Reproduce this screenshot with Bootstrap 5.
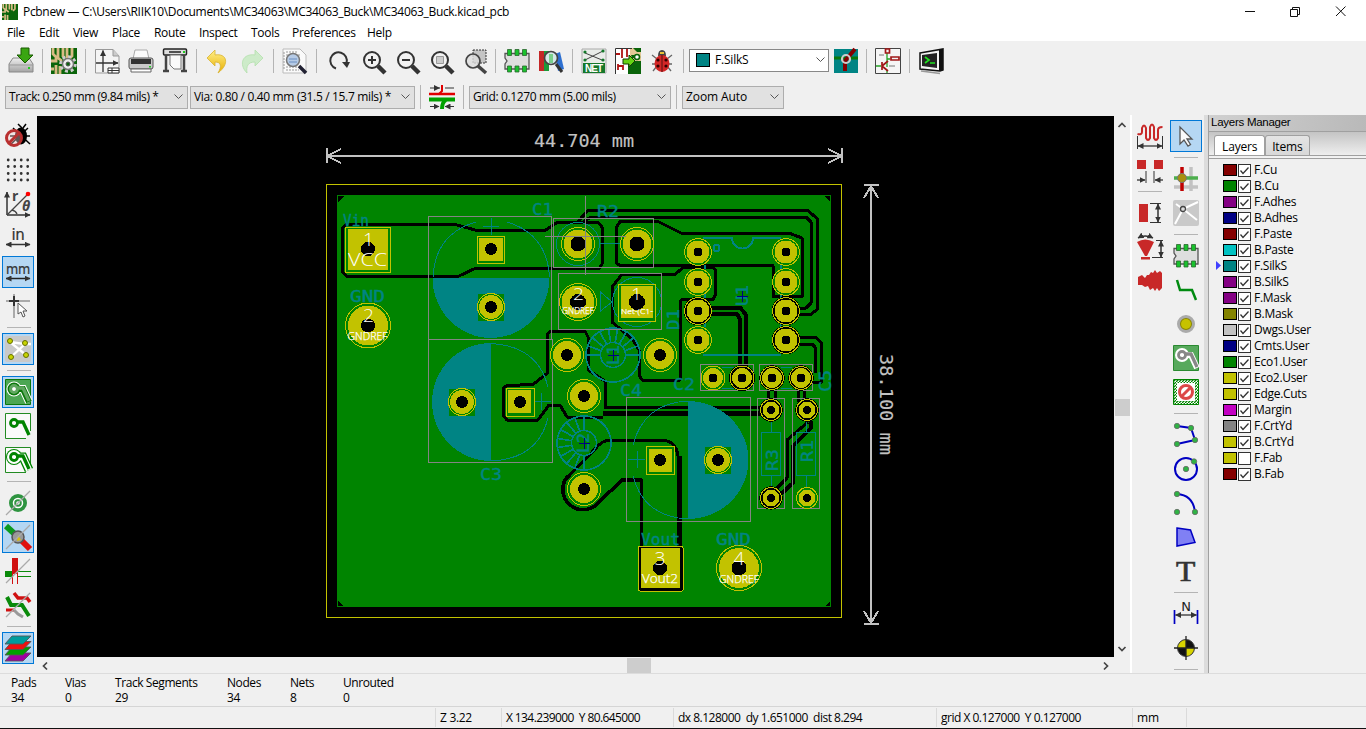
<!DOCTYPE html>
<html lang="en">
<head>
<meta charset="utf-8">
<title>Pcbnew</title>
<link href="https://cdn.jsdelivr.net/npm/bootstrap@5.3.0/dist/css/bootstrap.min.css" rel="stylesheet">
<style>
html,body{height:100%;overflow:hidden}
body{font:12px/16px "Open Sans","Noto Sans",sans-serif;letter-spacing:-.3px;color:#000;background:#f0f0f0;white-space:nowrap}
svg{display:block;flex:none}
.defs{position:absolute;width:0;height:0}
.titlebar{height:23px;background:#fff}
.ttl{margin-left:5px;letter-spacing:-.32px}
.menus{height:18px;background:#fff;padding:2px 0 0 7px}
.bar1{height:40px;padding-left:4px}
.bar2{height:34px;padding:0 0 2px 5px}
.tool{width:34px;height:34px;flex:none;display:flex;align-items:center;justify-content:center}
.tool svg{overflow:visible}
.tool.on{background:linear-gradient(#b5d7f3,#b5d7f3) center/30px 30px no-repeat,linear-gradient(#0078d7,#0078d7) center/32px 32px no-repeat}
.vsep{width:1px;height:24px;margin:0 4px;background:#b4b4b4;flex:none}
.hsep{height:1px;width:24px;margin:4px auto;background:#b4b4b4;flex:none}
.combo{height:23px;border:1px solid #adadad;background:#e1e1e1;padding:0 3px;flex:none;letter-spacing:-.38px}
.combo.pale{background:#fff;border-color:#888;letter-spacing:-.2px}
.workspace{height:558px}
.sidebar{width:37px;padding:4px 0 0 1px}
.toolcol{width:36px;padding-top:4px}
.canvasbox{width:1078px;padding-top:1px}
.hscroll{height:17px;background:#f0f0f0}
.vscroll{width:16px;padding-top:1px}
.thumb{background:#cdcdcd}
.dock{width:158px;border-left:1px solid #a0a0a0;background:#f0f0f0}
.dockhead{height:16px;line-height:15px;background:linear-gradient(100deg,#d0d0d0,#b9b9b9);font-family:"Liberation Sans",sans-serif;font-size:11.5px;letter-spacing:-.27px;padding-left:2px}
.docktabs{height:28px;background:linear-gradient(#c4c4c4,#f4f4f4);border-top:1px solid #a0a0a0;border-bottom:1px solid #a0a0a0;padding:0 0 3px 5px}
.dtab{border:1px solid #a0a0a0;border-bottom:0;border-radius:3px 3px 0 0;background:linear-gradient(#e4e4e4,#d8d8d8);height:20px;line-height:22px;padding:0 7px 0 6px;font-size:12px;letter-spacing:-.2px}
.dtab.cur{background:#fff;padding:0 7px}
.tabline{height:1px;background:#a0a0a0;margin-top:-4px;margin-bottom:3px}
.lrow{height:16px}
.sw{width:14px;height:12px;border:1px solid #000;margin-right:1px}
.cb{width:13px;height:13px;border:1px solid #333;background:#fff}
.info{height:33px;border-top:1px solid #dcdcdc;padding:1px 0 0 11px;line-height:15px;letter-spacing:-.42px}
.stat{height:22px;border-top:1px solid #d5d5d5;letter-spacing:-.5px}
.stat>div{border-left:1px solid #dadada;height:19px;margin-top:1px;padding-left:4px;line-height:20px}
.foot{height:1px;background:#111}
</style>
</head>
<body class="d-flex flex-column">
<!-- shared icon artwork, all drawn around the origin -->
<svg class="defs">
<defs>
<pattern id="hatch" width="3" height="3" patternUnits="userSpaceOnUse"><path d="M0 3L3 0" stroke="#008400" stroke-width="1.300"/></pattern>
<marker id="ar" viewBox="0 0 6 6" refX="5.500" refY="3" markerWidth="6" markerHeight="6" orient="auto-start-reverse" markerUnits="userSpaceOnUse"><path d="M0 0L6 3L0 6z" fill="#333"/></marker>
<linearGradient id="gy" x2="0" y2="1"><stop stop-color="#fff08a"/><stop offset="1" stop-color="#e8ae00"/></linearGradient>
<linearGradient id="gg" x2="0" y2="1"><stop stop-color="#eee"/><stop offset="1" stop-color="#a4a4a4"/></linearGradient>
<symbol id="mag" viewBox="-13 -13 26 26"><circle cx="-2" cy="-2" r="8" fill="#f2f2f2" stroke="#333" stroke-width="2"/><path d="M4 4L11 11" stroke="#333" stroke-width="4.500"/></symbol>
<symbol id="pcb" viewBox="0 0 26 26"><path fill="#0a640a" d="M0 0h26v26H0z"/><path d="M2 0v6l3 3v4H0M7 0v10l4 3M12 0v9M16 0v10M5 26v-9M0 21h3M9 26v-8M21 0v8l-3 3" fill="none" stroke="#d8bb84" stroke-width="2.800"/></symbol>
<symbol id="chip" viewBox="-13 -13 26 26"><path d="M-12-7.500H12V8H-12V3L-10 0L-12-3z" fill="#dedede" stroke="#555" stroke-width="1.300"/><g fill="#19c22d" stroke="#2b662f" stroke-width=".8"><path d="M-9.500-11.500h4v6h-4zM-2-11.500h4v6h-4zM5.500-11.500h4v6h-4zM-9.500 5h4v6h-4zM-2 5h4v6h-4zM5.500 5h4v6h-4z"/></g></symbol>
<symbol id="trk" viewBox="-13 -13 26 26"><circle cx="-4" cy="-3" r="3.500" fill="none" stroke="currentColor" stroke-width="2.800"/><path d="M-1-4H5L11 9" fill="none" stroke="currentColor" stroke-width="3.300"/></symbol>
</defs>
</svg>

<div class="titlebar d-flex align-items-center">
<svg width="16" height="16" style="margin-left:2px"><use href="#pcb"/></svg>
<span class="ttl">Pcbnew — C:\Users\RIIK10\Documents\MC34063\MC34063_Buck\MC34063_Buck.kicad_pcb</span>
<svg width="140" height="22" class="ms-auto" viewBox="1226 0 140 22"><path d="M1245 10.500h10M1290.500 8.500h7v7h-7zM1292.500 8V6.500h7v7H1298M1336 5.500l9.500 9.500M1345.500 5.500L1336 15" fill="none" stroke="#111"/></svg>
</div>
<div class="menus d-flex align-items-center" id="menus"></div>

<div class="bar1 d-flex align-items-center" id="bar1">
<div class="tool"><svg width="26" height="26" viewBox="-13 -13 26 26"><path d="M-12 3L-8-3H8L12 3V11H-12z" fill="url(#gg)" stroke="#888"/><path d="M-12 4H12" stroke="#999"/><path d="M7 6h2v2h-2z" fill="#2c2"/><path d="M0-13H8V-6H12L4 2L-4-6H0z" fill="#3aa512" stroke="#185a00"/></svg></div>
<div class="vsep"></div>
<div class="tool"><svg width="26" height="26" viewBox="0 0 26 26"><use href="#pcb"/><circle cx="17" cy="16" r="7.300" fill="none" stroke="#ccc" stroke-width="3" stroke-dasharray="3 2.700"/><circle cx="17" cy="16" r="5.500" fill="#eee" stroke="#777" stroke-width="1.500"/><circle cx="17" cy="16" r="2" fill="#0a640a" stroke="#555"/></svg></div>
<div class="vsep"></div>
<div class="tool"><svg width="26" height="26" viewBox="-13 -13 26 26"><path d="M-11.500-11.500H6L12-5V12H-11.500z" fill="#f4f4f4" stroke="#999"/><path d="M6-11.500V-5H12" fill="#ccc" stroke="#999"/><path d="M-4-10.500V11M-11 2H11" stroke="#333" stroke-width="1.300" marker-start="url(#ar)" marker-end="url(#ar)"/><path d="M1 7h11v5H1zM1 9.500h11M5 7v5" fill="#fff" stroke="#333"/></svg></div>
<div class="tool"><svg width="26" height="26" viewBox="-13 -13 26 26"><path d="M-8-2L-6-11H6L8-2z" fill="#fafafa" stroke="#aaa"/><rect x="-12" y="-3" width="24" height="11" rx="2" fill="#c9c9c9" stroke="#555"/><path d="M-10-2H10V3H-10z" fill="#333"/><path d="M-10 8H10V11H-10z" fill="#fff" stroke="#666"/><path d="M8 5h2v1.500H8z" fill="#2c2"/></svg></div>
<div class="tool"><svg width="26" height="26" viewBox="-13 -13 26 26"><rect x="-11.500" y="-12" width="23" height="6" rx="1" fill="#ddd" stroke="#222" stroke-width="1.500"/><path d="M-6-9H6" stroke="#222" stroke-width="1.500"/><path d="M8-10h2v2h-2z" fill="#2c2"/><path d="M-9-6V9M9-6V9M-12 10h6M6 10h6" stroke="#444" stroke-width="2.500"/><path d="M-5-6H6V8H-1L-5 4z" fill="#fafafa" stroke="#777"/></svg></div>
<div class="vsep"></div>
<div class="tool"><svg width="26" height="26" viewBox="-13 -13 26 26"><path d="M-11-3L-3-11V-6C9-8 12 3 0 12C4 5 3 1-3 1V5z" fill="url(#gy)" stroke="#d8b230" stroke-width=".8"/></svg></div>
<div class="tool"><svg width="26" height="26" viewBox="-13 -13 26 26"><path d="M11-3L3-11V-6C-9-8-14 3-5 12C-6 5-4 1 3 1V5z" fill="#cdebc9" stroke="#b2dfac" stroke-width=".8"/></svg></div>
<div class="vsep"></div>
<div class="tool"><svg width="26" height="26" viewBox="-13 -13 26 26"><path d="M-12-12H5L11-6V12H-12z" fill="#fafafa" stroke="#bbb"/><path d="M-9-9H3M-9-6H5M-9 6H2M-9 9H4M-11-9v18" stroke="#999" stroke-dasharray="2 1"/><circle cx="-2" cy="-1" r="6.500" fill="#b6cbe6" stroke="#777" stroke-width="1.500"/><path d="M-6-2H2M-6 1H2" stroke="#6a8fc2"/><path d="M4 5L11 12" stroke="#223" stroke-width="3.500"/></svg></div>
<div class="vsep"></div>
<div class="tool"><svg width="26" height="26" viewBox="-13 -13 26 26"><path d="M-2 7.500A8.300 8.300 0 1 1 8.500 2" fill="none" stroke="#333" stroke-width="2"/><path d="M4 1H12L9 7z" fill="#333"/></svg></div>
<div class="tool"><svg width="26" height="26" viewBox="-15 -14 26 26"><use href="#mag" x="-13" y="-13" width="26" height="26"/><path d="M-6-2H2M-2-6V2" stroke="#333" stroke-width="2"/></svg></div>
<div class="tool"><svg width="26" height="26" viewBox="-15 -14 26 26"><use href="#mag" x="-13" y="-13" width="26" height="26"/><path d="M-6-2H2" stroke="#333" stroke-width="2"/></svg></div>
<div class="tool"><svg width="26" height="26" viewBox="-15 -14 26 26"><use href="#mag" x="-13" y="-13" width="26" height="26"/><path d="M-5.500-5.500h7v7h-7z" fill="#ccc" stroke="#999"/></svg></div>
<div class="tool"><svg width="26" height="26" viewBox="-16 -14 26 26"><path d="M-4-12H9V1H-4z" fill="#c4c4c4" stroke="#333" stroke-dasharray="2 1"/><circle cx="-4" cy="-1" r="7" fill="#ddd" fill-opacity=".8" stroke="#444" stroke-width="1.700"/><path d="M1 4L9 11" stroke="#444" stroke-width="3.500"/></svg></div>
<div class="vsep"></div>
<div class="tool"><svg width="26" height="26"><use href="#chip"/></svg></div>
<div class="tool"><svg width="26" height="26" viewBox="-13 -13 26 26"><path d="M-12-10h5V10h-5z" fill="#c42727"/><path d="M-7-10h5V10h-5z" fill="#1c9a3a"/><path d="M4-7L9-9L13 8L7 10z" fill="#2d6fd0"/><circle cx="0" cy="-3" r="6.500" fill="#d5e8e8" stroke="#444" stroke-width="1.700"/><path d="M-2-7h4V2h-4z" fill="#7ad08c"/><path d="M5 3L11 11" stroke="#333" stroke-width="3"/></svg></div>
<div class="vsep"></div>
<div class="tool"><svg width="26" height="26" viewBox="-13 -13 26 26"><path d="M-12-12H12V12H-12z" fill="#e9ece9" stroke="#aaa"/><path d="M-9-8L8-1M-9-1L9-10" stroke="#444"/><g fill="#14782a"><circle cx="-9" cy="-9" r="1.600"/><circle cx="9" cy="-10" r="1.600"/><circle cx="-9" cy="-1" r="1.600"/><circle cx="9" cy="-1" r="1.600"/><path d="M-11 2H11V12H-11z"/></g><text y="11" text-anchor="middle" font-family="Liberation Sans" font-weight="bold" font-size="10" letter-spacing="0" fill="#fff" textLength="18">NET</text></svg></div>
<div class="tool"><svg width="26" height="26" viewBox="-13 -13 26 26"><path fill="#fff" d="M-13-13H2V13H-13z"/><path fill="#0a640a" d="M0 0H13V13H0z"/><path fill="#e5c998" d="M2-13H13V0H2z"/><path fill="#0a640a" d="M5-13H13V-9H9zM3-6h6v3H4z"/><circle cx="9" cy="-4" r="2.500" fill="#fff" stroke="#0a640a" stroke-width="1.500"/><path d="M-12-7h4M-6-12v9M-10 3v6M-10 5h5v4M-1-12v8" stroke="#b01414" stroke-width="1.800" fill="none"/><path d="M-12.500 13V-12.500H4" stroke="#333" fill="none"/><path d="M-5-2H1V-6L7 0L1 6V3H-5z" fill="#66d315" stroke="#153c05"/></svg></div>
<div class="tool"><svg width="26" height="26" viewBox="-13 -13 26 26"><path d="M-10-6L-5-2M10-6L5-2M-10 3H10M-9 10L-5 5M9 10L5 5" stroke="#666" stroke-width="1.300"/><path d="M-4-5Q-4-11 0-11T4-5z" fill="#444"/><path d="M-2-9h4v2h-4z" fill="#e8c13a"/><ellipse cy="2.500" rx="7.500" ry="8.500" fill="#d42626"/><path d="M0-6V11" stroke="#511"/><g fill="#300"><circle cx="-4" cy="-1" r="1.600"/><circle cx="4" cy="-1" r="1.600"/><circle cx="-4" cy="5" r="1.600"/><circle cx="4" cy="5" r="1.600"/></g></svg></div>
<div class="vsep"></div>
<div class="combo pale d-flex align-items-center" style="width:140px;margin:0 0 2px 1px;padding-left:6px"><span class="sw" style="background:#008484;height:14px;width:14px;margin-right:5px"></span><span>F.SilkS</span><svg class="ms-auto" width="9" height="6"><path d="M.5.500L4.500 4.500L8.500.500" fill="none" stroke="#555"/></svg></div>
<div class="tool"><svg width="24" height="24" viewBox="-12 -12 24 24"><path fill="#008484" d="M-12-12h24v24h-24z"/><path d="M-12-3H12" stroke="#0a780a" stroke-width="3"/><path d="M-1 10V0L9-12" fill="none" stroke="#840000" stroke-width="4"/><circle cx="0" cy="-2" r="4" fill="none" stroke="#ccc" stroke-width="2.200"/></svg></div>
<div class="vsep" style="margin-left:3px"></div>
<div class="tool"><svg width="26" height="26" viewBox="-13 -13 26 26"><path d="M-12.500-12.500h25v25h-25z" fill="#f5f5f5" stroke="#444"/><path d="M-1-8V6M-12 5h5M-1-2H2M-1 9v3" stroke="#24a324" stroke-width="1.300"/><path d="M-2.500-12h4v4h-4zM3-4h8v3H3zM-6 1v8M-6 5L0 0M-6 5L0 10" fill="none" stroke="#a01818" stroke-width="1.700"/><path d="M-9-6h5M1 5h6" stroke="#777"/></svg></div>
<div class="vsep"></div>
<div class="tool"><svg width="26" height="26" viewBox="-13 -13 26 26"><path d="M-11-8L12-12V9L9 10L-11 8z" fill="#f3f3f3" stroke="#111" stroke-width="1.500"/><path d="M8-11L12-12V9L8 10z" fill="#111"/><path d="M-9-6L6-8V7L-9 5z" fill="#222"/><path d="M-6-4L-2-1L-6 2M-1 2H4" stroke="#1ee01e" stroke-width="1.700" fill="none"/><path d="M-10 10L9 12.500" stroke="#999" stroke-width="1.700"/></svg></div>
</div>

<div class="bar2 d-flex align-items-center">
<div class="combo d-flex align-items-center" style="width:183px;letter-spacing:-.44px">Track: 0.250 mm (9.84 mils) *<svg class="ms-auto" width="10" height="6"><path d="M.5.500L4.500 4.500L8.500.500" fill="none" stroke="#555"/></svg></div>
<div class="combo d-flex align-items-center" style="width:225px;margin-left:2px;letter-spacing:-.34px">Via: 0.80 / 0.40 mm (31.5 / 15.7 mils) *<svg class="ms-auto" width="10" height="6"><path d="M.5.500L4.500 4.500L8.500.500" fill="none" stroke="#555"/></svg></div>
<div class="vsep" style="margin-left:5px"></div>
<div class="tool" style="width:34px"><svg width="26" height="26" viewBox="-13 -13 26 26"><path d="M-13-3H13" stroke="#e00000" stroke-width="2.500"/><path d="M-3-3L0-6V-12" stroke="#e00000" stroke-width="2" fill="none"/><path d="M-13 2.500H13" stroke="#00a000" stroke-width="4"/><path d="M4 3Q0 5 0 12" stroke="#00a000" stroke-width="4" fill="none"/><path d="M-12-9H-2M-12 9.500H-3" stroke="#333" marker-end="url(#ar)"/><path d="M12-9H3M12 9.500H3" stroke="#333" marker-end="url(#ar)"/><path d="M-8-12L-2-9L-8-6z" fill="#333"/></svg></div>
<div class="vsep"></div>
<div class="combo d-flex align-items-center" style="width:202px;margin-left:1px">Grid: 0.1270 mm (5.00 mils)<svg class="ms-auto" width="10" height="6"><path d="M.5.500L4.500 4.500L8.500.500" fill="none" stroke="#555"/></svg></div>
<div class="vsep" style="margin-left:5px"></div>
<div class="combo d-flex align-items-center" style="width:102px;letter-spacing:-.1px;margin-left:1px">Zoom Auto<svg class="ms-auto" width="10" height="6"><path d="M.5.500L4.500 4.500L8.500.500" fill="none" stroke="#555"/></svg></div>
</div>

<div class="workspace d-flex">
<div class="sidebar d-flex flex-column">
<div class="tool"><svg width="26" height="26" viewBox="-13 -13 26 26"><path d="M-5-8L12 8M10-8L-8 9M-8 0H12M0-12L4-8M8-12L5-8" stroke="#000" stroke-width="1.500"/><ellipse cx="3" cy="0" rx="6" ry="8.500" fill="#000"/><circle cx="-4" cy="2" r="7.500" fill="#f4d0d0" fill-opacity=".4" stroke="#b93030" stroke-width="3"/><path d="M-9 7L1-3" stroke="#b93030" stroke-width="3"/></svg></div>
<div class="tool"><svg width="26" height="26" viewBox="-13 -13 26 26"><g stroke="#333" stroke-width="2.800" stroke-linecap="round" stroke-dasharray="0 6.500"><path d="M-9.800-10H11M-9.800-3.500H11M-9.800 3.500H11M-9.800 10H11"/></g></svg></div>
<div class="tool"><svg width="26" height="26" viewBox="-13 -13 26 26"><path d="M-11 11V-12" stroke="#333" stroke-width="1.500" marker-end="url(#ar)"/><path d="M-11 11H12" stroke="#333" stroke-width="1.500" marker-end="url(#ar)"/><path d="M-11 11L9-9M-6 6Q-2 7-1 10" stroke="#444" stroke-width="1.300" fill="none"/><circle cx="10" cy="-10" r="2.300" fill="#f00"/><text x="-6" y="-3" font-size="14" font-weight="bold" fill="#444">r</text><text x="4" y="7" font-size="14" font-weight="bold" font-style="italic" fill="#444">θ</text></svg></div>
<div class="tool"><svg width="26" height="26" viewBox="-13 -13 26 26"><text x="0" y="2" text-anchor="middle" font-size="15" fill="#333" stroke="#333" stroke-width=".2" font-family="DejaVu Sans">in</text><path d="M-12 6.500H12" stroke="#333" stroke-width="1.500" marker-start="url(#ar)" marker-end="url(#ar)"/></svg></div>
<div class="tool on"><svg width="26" height="26" viewBox="-13 -13 26 26"><text x="-12" y="2" font-size="14" fill="#333" stroke="#333" stroke-width=".2" textLength="24" lengthAdjust="spacingAndGlyphs" font-family="DejaVu Sans">mm</text><path d="M-12 6.500H12" stroke="#222" stroke-width="1.500" marker-start="url(#ar)" marker-end="url(#ar)"/></svg></div>
<div class="tool"><svg width="26" height="26" viewBox="-13 -13 26 26"><path d="M-4-12V12M-12-5H12" stroke="#aaa" stroke-width="2"/><path d="M-4-10V0M-9-5H1" stroke="#333" stroke-width="2"/><path d="M0-3V8L3 6L5 11L7 10L5 5H9z" fill="#fff" stroke="#555"/></svg></div>
<div class="hsep"></div>
<div class="tool on"><svg width="26" height="26" viewBox="-13 -13 26 26"><rect x="-13" y="-13" width="26" height="26" rx="2" fill="#c9c9c9"/><path d="M-8-7L7-5L-7 8M-8-7L8 6M7-5H13" stroke="#fff" stroke-width="2.300" fill="none"/><g fill="#c8d400" stroke="#667000"><circle cx="-8" cy="-8" r="2.500"/><circle cx="7" cy="-6" r="2.500"/><circle cx="-7" cy="8" r="2.500"/><circle cx="8" cy="6" r="2.500"/></g></svg></div>
<div class="hsep"></div>
<div class="tool on"><svg width="26" height="26" viewBox="-13 -13 26 26"><path d="M-12.500-12.500h25v25h-25z" fill="#4ca653" stroke="#0a780a"/><path d="M-4-3H5L11 10" fill="none" stroke="#fff" stroke-width="8"/><circle cx="-4" cy="-3" r="7.500" fill="#fff"/><path d="M-4-3H5L11 10" fill="none" stroke="#0a780a" stroke-width="6"/><circle cx="-4" cy="-3" r="6.500" fill="#0a780a"/><use href="#trk" x="-13" y="-13" width="26" height="26" color="#fff" opacity=".35"/><circle cx="-4" cy="-3" r="2" fill="#fff"/></svg></div>
<div class="tool"><svg width="26" height="26" viewBox="-13 -13 26 26"><path d="M8 12.500H-12.500V-12.500H12.500V5" fill="#fafafa" stroke="#228b22"/><use href="#trk" x="-13" y="-13" width="26" height="26" color="#008400"/></svg></div>
<div class="tool"><svg width="26" height="26" viewBox="-13 -13 26 26"><path d="M8 12.500H-12.500V-12.500H12.500V5" fill="#fafafa" stroke="#228b22"/><path d="M-4-3H5L11 10" fill="none" stroke="#008400" stroke-width="9"/><circle cx="-4" cy="-3" r="8" fill="#008400"/><path d="M-4-3H5L11 10" fill="none" stroke="#fff" stroke-width="6.500"/><circle cx="-4" cy="-3" r="7" fill="#fff"/><use href="#trk" x="-13" y="-13" width="26" height="26" color="#008400"/></svg></div>
<div class="hsep"></div>
<div class="tool"><svg width="26" height="26" viewBox="-13 -13 26 26"><circle r="9" fill="#2e9440"/><circle r="4.500" fill="#2e9440" stroke="#fff" stroke-width="1.500"/><circle r="1.800" fill="#fff"/><path d="M-12 12L12-12" stroke="#aaa" stroke-width="1.300"/></svg></div>
<div class="tool on"><svg width="26" height="26" viewBox="-13 -13 26 26"><path d="M-12-11L0 0" stroke="#0d9a20" stroke-width="6"/><path d="M0 0L12 12" stroke="#e01010" stroke-width="6"/><circle r="6" fill="#999" stroke="#555" stroke-width="1.500"/><path d="M0-2L3 3L-1 4z" fill="#d8c010"/><path d="M-12 12L12-12" stroke="#aaa" stroke-width="1.300"/></svg></div>
<div class="tool"><svg width="26" height="26" viewBox="-13 -13 26 26"><path d="M-6-13H0V3H-6z" fill="#d01010"/><path d="M-13 0H-6V6H-13z" fill="#0a8a0a"/><path d="M-5.500 3V13M-.5 3V13" stroke="#d01010"/><path d="M0 .500H13M0 5.500H13" stroke="#0a8a0a"/><path d="M-12 12L12-12" stroke="#aaa" stroke-width="1.300"/></svg></div>
<div class="tool"><svg width="26" height="26" viewBox="-13 -13 26 26"><path d="M-4-12L0-7H9L12-3" stroke="#d01010" stroke-width="3.500" fill="none"/><path d="M-11-8L-7 0H4L11 11" stroke="#0a8a0a" stroke-width="4" fill="none"/><path d="M-12 5H-4" stroke="#d01010" stroke-width="3"/><path d="M-4 5L0 9L5 12" stroke="#999" stroke-width="3" fill="none"/><path d="M-12 12L12-12" stroke="#aaa" stroke-width="1.300"/></svg></div>
<div class="hsep"></div>
<div class="tool on"><svg width="28" height="28" viewBox="-14 -14 28 28"><g stroke="#555" stroke-width=".9"><path d="M-13 13L-6 5H13L5 13z" fill="#a000a0"/><path d="M-13 7L-6-1H13L5 7z" fill="#00a000"/><path d="M-13 1.500L-6-6.500H13L5 1.500z" fill="#f01010"/><path d="M-13-4L-6-12H13L5-4z" fill="#009c9c"/></g></svg></div>
</div>

<div class="canvasbox">
<svg id="board" width="1077" height="541" viewBox="37 116 1077 541" font-family="DejaVu Sans Mono" shape-rendering="crispEdges">
<path fill="#000" d="M37 116h1077v541H37z"/>
<path d="M337 195H831V607H337" fill="#008400"/>
<path d="M326.500 184.500H841.500V617.500H326.500z" fill="none" stroke="#c2c200"/>
<path d="M338 196h7l-7 6zM830 196h-6l6 5zM338 601v5h5zM830 601v5h-4z" fill="#000"/>
<g stroke="#c2c2c2" stroke-width="2" fill="none"><path d="M327 156H842M327 148V163M842 148V163M341 149L327 156L341 163M828 149L842 156L828 163M871 185V624M864 185H879M864 624H879M864 198L871 186L878 198M864 611L871 623L878 611"/></g>
<!-- zone clearances -->
<g fill="none" stroke="#000" stroke-width="3" stroke-linejoin="round">
<path d="M346 224.500H455L477 230.500H545L557 222.500H598L602 227V264L599 268.500H475L458 276.500H347L342 271V229z"/>
<path d="M577 222.500L588 210.500H808L817.500 219V309L811 314.500H800M583 222L591 217H806L811 222V303L806 308H800"/>
<path d="M616 228L620 221.500H658L682 233.500H790L802 238V296.500H773V265.500H620L616 263z"/>
<path d="M683 267.500L675 274.500H622L612 287V322L633 340L639 350V375L642 380H680V302L682 299.500H713L715.500 295V270L712 267z"/>
<path d="M712 307.500H740L745.500 314V368M712 314H737L739.500 318V368" stroke-width="4"/>
<path d="M800 337.500H816L821.500 343V382H813M800 344H812L815 347V373"/>
<path d="M768.500 389V402M775 389V402M798.500 389V402M804 389V402"/>
<path d="M605 380V407.500H762" stroke-width="2.500"/><path d="M603 413.500H763" stroke-width="4.500"/>
<path d="M603 417H567L560 405H549L538 420H507L503 415V388L507 385.500L533 384.500L547.500 373V334L551 331H585L588 337V370L605 381V408"/>
<path d="M808 422L787 440V478L775 490"/><path d="M811 421V428L793 446V483L781 494" stroke-width="4"/>
<path d="M567 478L596 448Q602 440.500 610 440H660Q676 440 678 456V547"/><path d="M680 456V547"/>
<path d="M568 476A20 20 0 1 0 598 503L622 480H641.500V547" stroke-width="3.500"/>
</g>
<!-- filled capacitor halves -->
<g fill="#008484"><path d="M432.500 277.500H549.500A58.500 60.500 0 0 1 432.500 277.500z"/><path d="M491 343A59 59 0 0 0 491 461z"/><path d="M688 401A60.500 59 0 0 1 688 519z"/></g>
<g fill="none" stroke="#008484">
<path d="M433 277Q435 234 476 222M507 222Q547 234 549.500 277M491 218V235M483 226.500H499M491 343.500Q538 346 548 387M491 461Q538 459 548 418M533 401.500H551M541.500 393V410M688 401Q644 403 633 445M688 519Q644 517 633 476M628 459.500H645M637.500 451V468"/>
<circle cx="578" cy="244" r="21.500"/><path d="M600 243.500H620"/>
<circle cx="637" cy="302" r="24.500"/><path d="M600.500 292V311L612 302z"/>
<path d="M771 420V432M771 475V488M761.500 432.500H780.500V475.500H761.500zM806.500 420V432M806.500 475V488M796.500 432.500H815.500V475.500H796.500zM722 367H734M722 388H734M781 367H792M781 388H792"/>
<g stroke-width="2"><path d="M703 238H732A10.500 10.500 0 0 0 753 238H781M703 355H781M704.500 265V269M704.500 294V298M704.500 323V327M780.500 265V269M780.500 294V298M780.500 323V327"/><circle cx="716.500" cy="248" r="3"/>
<circle cx="613" cy="355" r="27" stroke-width="1.700"/><circle cx="613" cy="355" r="12.500" stroke-width="1.500"/><circle cx="584" cy="443" r="27" stroke-width="1.700"/><circle cx="584" cy="443" r="12.500" stroke-width="1.500"/>
<path id="spk1" stroke-width="1.700"/></g>
</g>
<g fill="none" stroke="#848484"><path d="M428.500 216.500H551.500V339.500H428.500zM428.500 339.500H552.500V462.500H428.500zM626.500 397.500H750.500V521.500H626.500zM553.500 218.500H653.500V267.500H553.500zM558.500 273.500H661.500V329.500H558.500zM700.500 364.500H753.500V390.500H700.500zM759.500 364.500H812.500V390.500H759.500zM757.500 398.500H784.500V508.500H757.500zM792.500 398.500H819.500V508.500H792.500z"/></g>
<g id="pads"></g>
<path d="M585.500 196V275M545 236.500H626" stroke="#848484"/>
<g id="labels"></g>
<path d="M737 296.500H748M742.500 291V302M608 355.500H619M613.500 350V361M579 443.500H590M584.500 438V449" stroke="#000084" stroke-width="1.200"/>
</svg>
<div class="hscroll d-flex align-items-center" style="width:1077px">
<svg width="20" height="16" viewBox="0 0 20 16"><path d="M10 4.500L6.500 8L10 11.500" fill="none" stroke="#444" stroke-width="1.700"/></svg>
<div class="thumb" style="width:24px;height:15px;margin-left:570px"></div>
<svg class="ms-auto" width="20" height="16" viewBox="0 0 20 16"><path d="M10 4.500L13.500 8L10 11.500" fill="none" stroke="#444" stroke-width="1.700"/></svg>
</div>
</div>
<div class="vscroll d-flex flex-column align-items-center">
<svg width="16" height="16"><path d="M4.500 11L8 7.500L11.500 11" fill="none" stroke="#444" stroke-width="1.700"/></svg>
<div class="thumb" style="width:15px;height:17px;margin-top:267px"></div>
<svg width="16" height="16" style="margin-top:225px"><path d="M4.500 6L8 9.500L11.500 6" fill="none" stroke="#444" stroke-width="1.700"/></svg>
</div>
<div style="width:2px;background:#fff"></div>
<div class="toolcol d-flex flex-column align-items-center">
<div class="tool"><svg width="26" height="26" viewBox="-13 -13 26 26"><path d="M-12.500-2Q-8-1-8-4V-8Q-6-13-4-8V2Q-2 6 0 2V-9Q2-14 4-9V2Q6 6 8 2V-6Q8-9 12.500-9" stroke="#c82828" stroke-width="2" fill="none"/><path d="M-12.500 0V13M12.500 0V13" stroke="#333"/><path d="M-12 10H12" stroke="#333" stroke-width="1.300" marker-start="url(#ar)" marker-end="url(#ar)"/></svg></div>
<div class="tool"><svg width="26" height="26" viewBox="-13 -13 26 26"><path d="M-13-10h9v9h-9zM4-10h9v9H4z" fill="#c82828"/><path d="M-4 1V13M4 1V13" stroke="#333"/><path d="M-13 10H-5" stroke="#333" stroke-width="1.300" marker-end="url(#ar)"/><path d="M13 10H5" stroke="#333" stroke-width="1.300" marker-end="url(#ar)"/></svg></div>
<div class="hsep"></div>
<div class="tool"><svg width="26" height="26" viewBox="-13 -13 26 26"><path d="M-11-9h9V9h-9z" fill="#c82828"/><path d="M0-9.500H11M0 9.500H11" stroke="#333"/><path d="M8-9V9" stroke="#333" stroke-width="1.500" marker-start="url(#ar)" marker-end="url(#ar)"/></svg></div>
<div class="tool"><svg width="26" height="26" viewBox="-13 -13 26 26"><path d="M-13-5Q-5-10 4-5L-3 9H-5zM-9 10h9v2.500h-9z" fill="#c82828"/><path d="M-12-9Q-5-13 3-9" stroke="#333" stroke-width="1.300" fill="none" marker-start="url(#ar)" marker-end="url(#ar)"/><path d="M6-6.500h7M2 10.500h11" stroke="#333"/><path d="M11-6V10" stroke="#333" stroke-width="1.500" marker-start="url(#ar)" marker-end="url(#ar)"/></svg></div>
<div class="tool"><svg width="26" height="26" viewBox="-13 -13 26 26"><path d="M-12-4L-8-6L-5-3L-3-6L-1-6L1-9L3-8L5-11L7-8L10-10L12-8V7L9 10L7 7L5 10L3 7L0 9L-2 5L-5 6L-8 4L-12 4z" fill="#c82828"/></svg></div>
</div>
<div class="toolcol d-flex flex-column align-items-center">
<div class="tool on"><svg width="26" height="26" viewBox="-13 -13 26 26"><path d="M-6-9V8L-2 4L2 10L4.500 8.500L1 3H6z" fill="#fafafa" stroke="#555" stroke-width="1.300"/></svg></div>
<div class="hsep"></div>
<div class="tool"><svg width="26" height="26" viewBox="-13 -13 26 26"><path d="M5-12V12M-12 8H12" stroke="#c2c2c2" stroke-width="3.500"/><path d="M-12-1H12" stroke="#4cae4c" stroke-width="3.500"/><path d="M-4-12V12" stroke="#c00000" stroke-width="3.500"/><circle cx="-4" cy="-1" r="4.500" fill="#a89010" stroke="#777"/></svg></div>
<div class="tool"><svg width="26" height="26" viewBox="-13 -13 26 26"><rect x="-13" y="-13" width="26" height="26" rx="2" fill="#c9c9c9"/><path d="M-3-4L12-11M-3-4L11 7M-3-4L-11 11M-3-4L-10-9" stroke="#fff" stroke-width="2"/><circle cx="-3" cy="-4" r="2.500" fill="#ddd" stroke="#444" stroke-width="1.300"/></svg></div>
<div class="hsep"></div>
<div class="tool"><svg width="26" height="26"><use href="#chip"/></svg></div>
<div class="tool"><svg width="26" height="26" viewBox="-13 -13 26 26"><path d="M-9-10L-6 0H6L10 10" stroke="#008a10" stroke-width="2.500" fill="none"/></svg></div>
<div class="tool"><svg width="26" height="26" viewBox="-13 -13 26 26"><circle r="7.500" fill="#8a8600" stroke="#aaa" stroke-width="3"/><circle r="5" fill="#c6c200"/></svg></div>
<div class="tool"><svg width="26" height="26" viewBox="-13 -13 26 26"><path d="M-12.500-12.500h25v25h-25z" fill="#57a95c" stroke="#2a8a30"/><path d="M-4-3H5L11 10" fill="none" stroke="#fff" stroke-width="6"/><circle cx="-4" cy="-3" r="7" fill="#fff"/><use href="#trk" x="-13" y="-13" width="26" height="26" color="#888"/></svg></div>
<div class="tool"><svg width="26" height="26" viewBox="0 0 26 26"><path d="M.5.500h25v25H.5z" fill="#fff"/><path d="M.5.500h25v25H.5z" fill="url(#hatch)" stroke="#008400"/><rect x="4" y="4" width="18" height="18" fill="#fff"/><circle cx="13" cy="13" r="6.500" fill="#fff" stroke="#dc4848" stroke-width="3"/><path d="M8.500 17.500L17.500 8.500" stroke="#dc4848" stroke-width="3"/></svg></div>
<div class="hsep"></div>
<div class="tool"><svg width="26" height="26" viewBox="-13 -13 26 26"><path d="M-9-9L5-7L9 5L-9 9" stroke="#0000c2" stroke-width="2" fill="none"/><g fill="#2fb344" stroke="#666" stroke-width=".8"><circle cx="-9" cy="-9" r="2.700"/><circle cx="5" cy="-7" r="2.700"/><circle cx="9" cy="5" r="2.700"/><circle cx="-9" cy="9" r="2.700"/></g></svg></div>
<div class="tool"><svg width="26" height="26" viewBox="-13 -13 26 26"><circle r="11" fill="none" stroke="#0000c2" stroke-width="2"/><g fill="#2fb344" stroke="#666" stroke-width=".8"><circle r="2.700"/><circle cx="8" cy="-7.500" r="2.700"/></g></svg></div>
<div class="tool"><svg width="26" height="26" viewBox="-13 -13 26 26"><path d="M-9-9Q7-8 9 9" stroke="#0000c2" stroke-width="2" fill="none"/><g fill="#2fb344" stroke="#666" stroke-width=".8"><circle cx="-9" cy="-9" r="2.700"/><circle cx="9" cy="9" r="2.700"/><circle cx="-9" cy="9" r="2.700"/></g></svg></div>
<div class="tool"><svg width="26" height="26" viewBox="-13 -13 26 26"><path d="M-9-9L4.500-7L9 5.500L-9 9z" fill="#8080f4" stroke="#0000c2" stroke-width="1.500"/></svg></div>
<div class="tool"><svg width="26" height="26" viewBox="-13 -13 26 26"><text x="-10" y="10" font-family="Liberation Serif" font-size="29" fill="#333" stroke="#333" stroke-width=".7" textLength="19" lengthAdjust="spacingAndGlyphs">T</text></svg></div>
<div class="hsep"></div>
<div class="tool"><svg width="26" height="26" viewBox="-13 -13 26 26"><path d="M-11.500-4V10M11.500-4V10" stroke="#0000c2" stroke-width="1.700"/><path d="M-10.500 1H10.500" stroke="#222" stroke-width="1.200" marker-start="url(#ar)" marker-end="url(#ar)"/><text y="-3" text-anchor="middle" font-size="13" fill="#222" font-family="DejaVu Sans">N</text></svg></div>
<div class="tool"><svg width="26" height="26" viewBox="-13 -13 26 26"><circle r="8.500" fill="#111" stroke="#444"/><path d="M0 0V-8A8 8 0 0 0-8 0zM0 0V8A8 8 0 0 0 8 0z" fill="#d8d400"/><path d="M-12 0H12M0-12V12" stroke="#222" stroke-width="1.300"/></svg></div>
<div class="hsep"></div>
</div>
<div style="width:4px;background:#dcdcdc"></div>
<div class="dock">
<div class="dockhead">Layers Manager</div>
<div class="docktabs d-flex align-items-end"><div class="dtab cur">Layers</div><div class="dtab">Items</div></div>
<div class="tabline"></div>
<div id="layers" style="padding-top:3px"></div>
</div>
</div>

<div class="info d-flex" id="info"></div>
<div class="stat d-flex">
<div style="width:435px;border:0"></div><div style="width:66px;letter-spacing:-.3px">Z 3.22</div><div style="width:172px;letter-spacing:-.6px">X 134.239000&nbsp; Y 80.645000</div><div style="width:263px">dx 8.128000&nbsp; dy 1.651000&nbsp; dist 8.294</div><div style="width:196px">grid X 0.127000&nbsp; Y 0.127000</div><div style="width:54px;letter-spacing:0">mm</div><div></div>
</div>
<div class="foot"></div>

<script src="https://cdn.jsdelivr.net/npm/bootstrap@5.3.0/dist/js/bootstrap.bundle.min.js"></script>
<script>
const $ = id => document.getElementById(id);
// menu entries with their slot widths
$('menus').innerHTML = [['File',32],['Edit',34],['View',39],['Place',42],['Route',45],['Inspect',52],['Tools',41],['Preferences',75],['Help',40]]
  .map(([t,w]) => `<span style="width:${w}px">${t}</span>`).join('');
// layer list
$('layers').innerHTML = [['F.Cu','#840000'],['B.Cu','#008400'],['F.Adhes','#840084'],['B.Adhes','#000084'],['F.Paste','#840000'],['B.Paste','#00c2c2'],['F.SilkS','#008484'],['B.SilkS','#840084'],['F.Mask','#840084'],['B.Mask','#848400'],['Dwgs.User','#c2c2c2'],['Cmts.User','#000084'],['Eco1.User','#008400'],['Eco2.User','#c2c200'],['Edge.Cuts','#c2c200'],['Margin','#c200c2'],['F.CrtYd','#848484'],['B.CrtYd','#c2c200'],['F.Fab','#c2c200'],['B.Fab','#840000']]
  .map(([n,c]) => `<div class="lrow d-flex align-items-center"><svg width="14" height="12">${n=='F.SilkS'?'<path d="M7 1L12 5.500L7 10z" fill="#4040ff"/>':''}</svg><span class="sw" style="background:${c}"></span><span class="cb"><svg width="11" height="11">${n=='F.Fab'?'':'<path d="M1.500 5.500L4 8.500L9.500 2.500" fill="none" stroke="#333" stroke-width="1.300"/>'}</svg></span><span style="margin-left:3px">${n}</span></div>`).join('');
$('info').innerHTML = [['Pads',34,54],['Vias',0,50],['Track Segments',29,112],['Nodes',34,63],['Nets',8,53],['Unrouted',0,60]]
  .map(([a,b,w]) => `<div style="width:${w}px">${a}<br>${b}</div>`).join('');
// round pads: x, y, radius, ring radius, hole radius, kind (q: green cut-out, k: black clearance)
const Y = '#c2c200', G = '#008400';
const round = [[368,325.5,20,22.5,7],[491,307,12,13.5,6,'q'],[578,244,14.5,16.5,7.5],[637,244,14.5,16.5,7.5],[578,302,16.5,18.5,8],[567,355,14,16.5,6],[660,355,14,16.5,6],[584,396,14,16.5,6],[584,489,14,16.5,6],[462,402,12,13.5,6,'q'],[718,460,12,13.5,6,'q'],[739,568,20,22.5,7.5],
 ...[252,282,311,340].flatMap((y,i)=>[[698,y,11.5,13.3,4.5,i==2?'k':''],[786,y,11.5,13.3,4.5,i>1?'k':'']]),
 [713,378,10,12,4.5],[742,378,10,12,4.5,'k'],[772,378,10,11.5,4.5,'k'],[801,378,10,11.5,4.5,'k'],[771,410,8.5,10.5,4,'k'],[807,410,8.5,10.5,4,'k'],[771,498,8.5,10.5,4,'k'],[807,498,8.5,10.5,4]];
const square = [[348,229,40,41,345.5,227.5,45,368,249,7],[479,238,24,23,477.5,236.5,27,491,249,6],[621,286,32,32,618.5,284.5,37,637,302,8],[508,390,23,23,506.5,388.5,28,520,402,6],[649,449,23,23,646.5,446.5,28,660,460,6],[641,548,39,40,638.5,546.5,44.5,660,568,7]];
$('pads').innerHTML = round.map(([x,y,r,o,h,k]) =>
  (k=='q'?`<path d="M${x-13} ${y-13.5}h26v27h-26z" fill="${G}"/>`:'') +
  `<circle cx="${x}" cy="${y}" r="${k=='k'?o+1.2:o}" fill="${k=='k'?'#000':G}"/>` +
  `<circle cx="${x}" cy="${y}" r="${o}" fill="none" stroke="${Y}"/><circle cx="${x}" cy="${y}" r="${r}" fill="${Y}"/><circle cx="${x}" cy="${y}" r="${h}" fill="#000"/>`).join('') +
  square.map(([x,y,w,h,ox,oy,s,cx,cy,r],i) => `<rect x="${ox}" y="${oy}" width="${s}" height="${s}" fill="${i==5?'#000':G}" stroke="${Y}" rx="1"/><rect x="${x}" y="${y}" width="${w}" height="${h}" fill="${Y}"/><circle cx="${cx}" cy="${cy}" r="${r}" fill="#000"/>`).join('');
// toroid windings
let d = '';
for (const [cx,cy,a0,a1] of [[613,355,-100,0],[613,355,180,250],[584,443,90,270]])
  for (let a=a0;a<=a1;a+=20){const t=a*Math.PI/180,c=Math.cos(t),s=Math.sin(t);d+=`M${cx+13*c} ${cy+13*s}L${cx+26*c} ${cy+26*s}`}
$('spk1').setAttribute('d', d);
// board lettering: text, x, baseline, width, size, colour, rotation
const S='#008484', W='#fff', D='#c2c2c2';
$('labels').innerHTML = [
 ['44.704 mm',534,147,100,17.5,D],['38.100 mm',880,354,101,17.5,D,90],
 ['Vin',343,225.5,26,16.5,S],['C1',532,214.5,21,16.5,S],['R2',597,216.5,22,16.5,S],['GND',350,301.5,35,16,S],['C3',480,479.5,22,16.5,S],['C4',620,395.5,22,16.5,S],['C2',673,390,22,16.5,S],['Vout',641,545,39,16.5,S],['GND',716,545,35,16.5,S],
 ['C5',830.5,392,22,16.5,S,-90],['R3',777.5,471,22,16.5,S,-90],['R1',812.5,462,22,16.5,S,-90],['D1',678.5,330,21,16.5,S,-90],['U1',748,306,21,16.5,S,-90],['L1',619,365,20,15,S,-90],['L2',589,453,20,15,S,-90],
 ['1',363,246,11,18,W],['VCC',348,266,39,18,W],['2',363,322,11,18,W],['GNDREF',347.5,340,40,10,W],['2',573,300,11,16,W],['GNDREF',562,314,32,9,W],['1',631,300,11,16,W],['Net-(C1-',621,313.5,32,7,W],['3',654.5,565,11,18,W],['Vout2',642,583,36,12,W],['4',733.5,565,11,18,W],['GNDREF',719,583,40,11,W]
].map(([t,x,y,w,s,c,r])=>`<text transform="translate(${x} ${y})${r?` rotate(${r})`:''}" font-size="${s}" fill="${c}" textLength="${w}" lengthAdjust="spacingAndGlyphs" stroke="${c}" stroke-width="${c==W?(s<13?.25:0):c==S?.4:.15}" ${c==W?'font-family="Open Sans" font-weight="300"':''} letter-spacing="0">${t}</text>`).join('');
</script>
</body>
</html>
